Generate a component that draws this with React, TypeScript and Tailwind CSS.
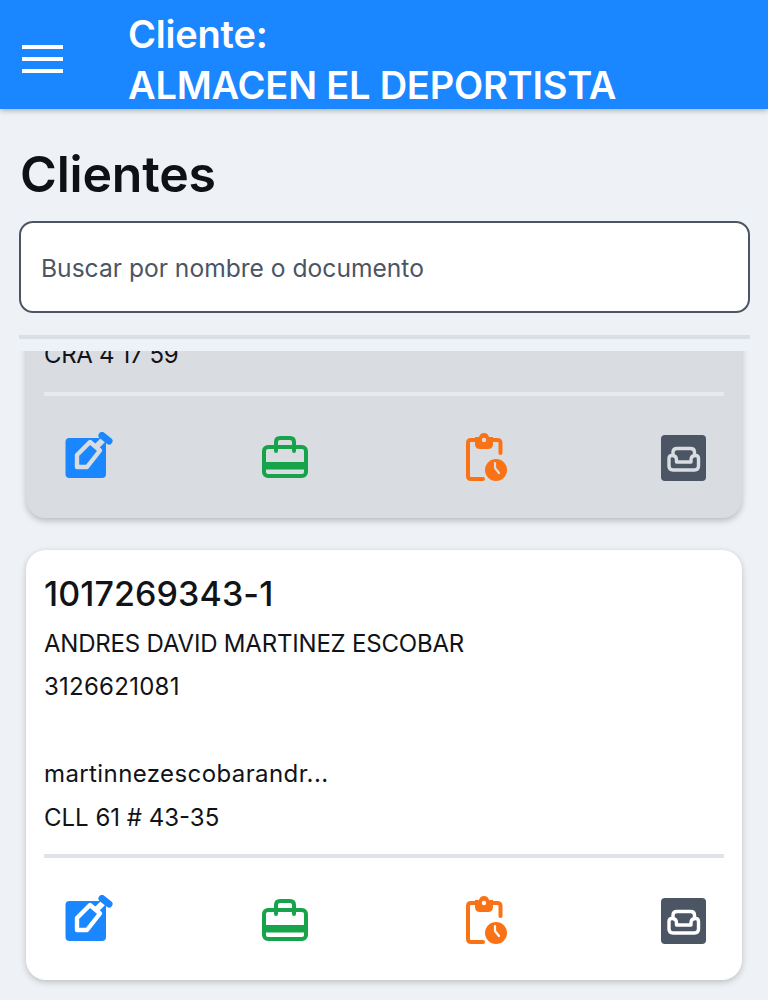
function EditIcon() {
  return (
    <svg width="48" height="50" viewBox="0 0 48 50" className="block">
      <rect x="0.5" y="6" width="40.5" height="40" rx="4" fill="#1a86ff" />
      <path d="M12 35 V23 L25 10 L35 18.5 L22 35 Z" fill="#1a86ff" stroke="var(--card)" strokeWidth="4.4" strokeLinejoin="round" />
      <path d="M31 15 L38 8" fill="none" stroke="var(--card)" strokeWidth="6" />
      <path d="M37 3.5 L44 9" fill="none" stroke="#1a86ff" strokeWidth="7" strokeLinecap="round" />
    </svg>
  );
}

function CaseIcon() {
  return (
    <svg width="46" height="50" viewBox="0 0 46 50" className="block">
      <g transform="translate(0 4)">
        <rect x="2" y="11" width="42" height="29" rx="4" fill="none" stroke="#16a34a" strokeWidth="4" />
        <rect x="2" y="26" width="42" height="7.5" fill="#16a34a" />
        <path d="M14 15 V6 Q14 2 18 2 H28 Q32 2 32 6 V15" fill="none" stroke="#16a34a" strokeWidth="4" strokeLinecap="round" />
      </g>
    </svg>
  );
}

function ClipboardIcon() {
  return (
    <svg width="42" height="50" viewBox="0 0 42 50" className="block">
      <path d="M17 47 H5 Q2 47 2 44 V11 Q2 8 5 8 H9 M27 8 H31 Q34.5 8 34.5 11 V21" fill="none" stroke="#f97316" strokeWidth="4" strokeLinecap="round" />
      <path d="M9 5 H13 Q14 1 18 1 Q22 1 23 5 H27 V12 Q27 17 22 17 H14 Q9 17 9 12 Z" fill="#f97316" />
      <circle cx="18" cy="8" r="2.2" fill="var(--card)" />
      <circle cx="30" cy="38" r="11" fill="#f97316" />
      <path d="M29 31 V36 L33 41" fill="none" stroke="var(--card)" strokeWidth="2.2" strokeLinecap="round" strokeLinejoin="round" />
    </svg>
  );
}

function SofaIcon() {
  return (
    <svg width="45" height="50" viewBox="0 0 45 50" className="block">
      <rect y="3" width="45" height="46" rx="4" fill="#4b5563" />
      <g fill="none" stroke="var(--card)" strokeWidth="3.4" strokeLinejoin="round">
        <path d="M12 24 V20 Q12 16.5 16 16.5 H29.5 Q33.5 16.5 33.5 20 V24" />
        <path d="M8 26.5 Q8 23.5 11 23.5 Q15.5 23.5 15.5 28 V30 H30 V28 Q30 23.5 34.5 23.5 Q37.5 23.5 37.5 26.5 V34 Q37.5 38 33.5 38 H12 Q8 38 8 34 Z" />
      </g>
    </svg>
  );
}

function Actions({ className }: { className: string }) {
  return (
    <div className={`flex items-start pl-[21px] ${className}`}>
      <EditIcon />
      <div className="ml-[149px]"><CaseIcon /></div>
      <div className="ml-[158px]"><ClipboardIcon /></div>
      <div className="ml-[153px]"><SofaIcon /></div>
    </div>
  );
}

export default function App() {
  return (
    <div className="w-[768px] h-[1000px] bg-[#eef2f6] overflow-hidden flex flex-col text-[#111318] font-['Inter',sans-serif]">
      <header className="h-[109px] shrink-0 bg-[#1a86ff] flex items-center shadow-[0_2px_5px_rgba(0,0,0,0.25)] relative z-10">
        <div className="w-[128px] pl-[22px] shrink-0 flex flex-col gap-[8px] mt-[9px]">
          <div className="w-[41px] h-[4px] bg-white" />
          <div className="w-[41px] h-[4px] bg-white" />
          <div className="w-[41px] h-[4px] bg-white" />
        </div>
        <div className="text-white text-[38px] font-semibold leading-[51px] tracking-[-0.2px] mt-[10px]">
          <div>Cliente:</div>
          <div>ALMACEN EL DEPORTISTA</div>
        </div>
      </header>

      <div className="pl-[19px] pr-[18px] flex flex-col shrink-0">
        <h1 className="text-[50px] font-semibold leading-[56px] tracking-[-0.2px] mt-[37px] ml-[1px] text-[#0e1116]">Clientes</h1>
        <div className="mt-[19px] h-[92px] bg-white border-2 border-[#4b5563] rounded-[14px] flex items-center pl-[20px] pt-[2px] text-[24.6px] text-[#4b5563]">
          Buscar por nombre o documento
        </div>
        <div className="mt-[22px] h-[4px] bg-[#dadfe5]" />
      </div>

      <div className="mt-[12px] flex-1 overflow-hidden px-[26px] flex flex-col">
        <div className="mt-[-12px] h-[179px] shrink-0 bg-[#d9dde2] rounded-b-[20px] shadow-[0_3px_6px_rgba(0,0,0,0.22)] px-[18px] [--card:#d9dde2]">
          <div className="text-[24px] leading-[32px] tracking-[-0.35px] h-[53px]">CRA 4 17 59</div>
          <div className="h-[4px] bg-[#e7eaee]" />
          <Actions className="mt-[36px]" />
        </div>

        <div className="mt-[32px] h-[430px] shrink-0 bg-white rounded-[20px] shadow-[0_2px_6px_rgba(0,0,0,0.22)] px-[18px] [--card:#ffffff]">
          <div className="text-[34px] font-medium leading-[40px] tracking-[0.1px] pt-[24px] h-[64px]">1017269343-1</div>
          <div className="text-[24px] leading-[43.4px] mt-[8px]">
            <div className="tracking-[-0.2px]">ANDRES DAVID MARTINEZ ESCOBAR</div>
            <div className="tracking-[0.25px]">3126621081</div>
            <div className="h-[43.4px]" />
            <div className="tracking-[0.4px]">martinnezescobarandr...</div>
            <div>CLL 61 # 43-35</div>
          </div>
          <div className="h-[4px] bg-[#dfe2e6] mt-[15px]" />
          <Actions className="mt-[37px]" />
        </div>
      </div>
    </div>
  );
}
